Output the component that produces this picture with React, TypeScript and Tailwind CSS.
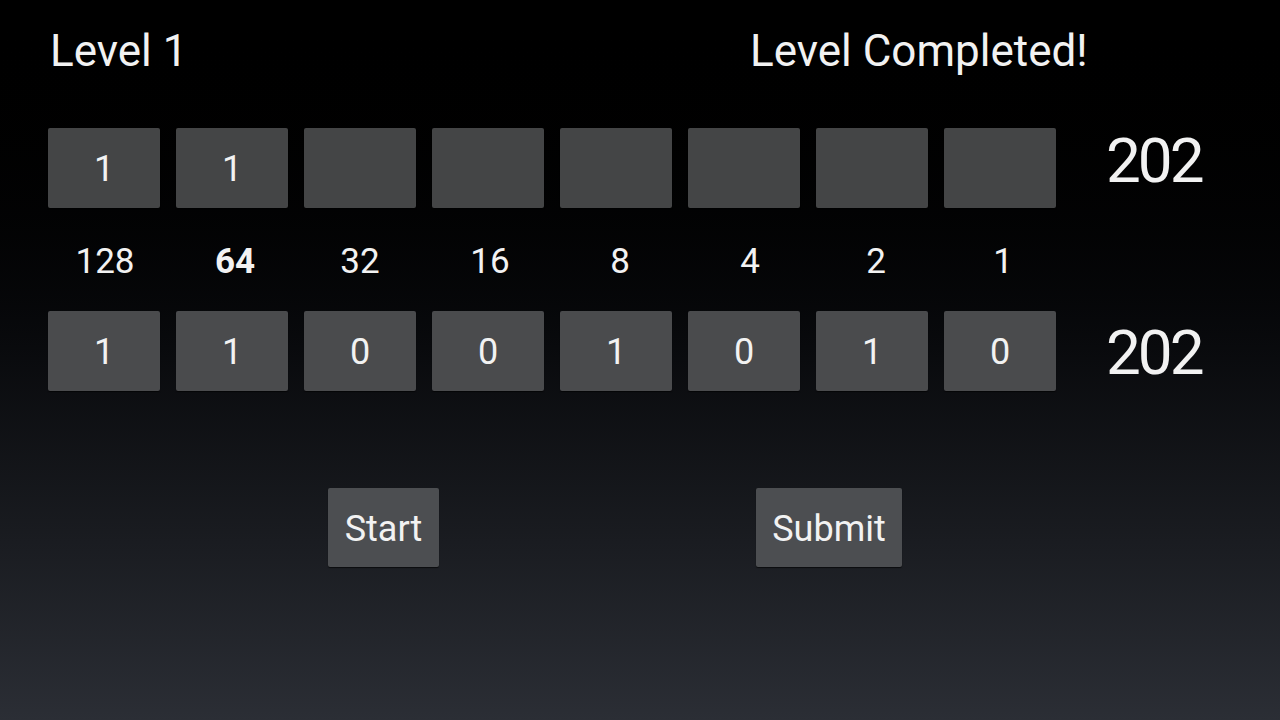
import React from "react";

const top = ["1", "1", "", "", "", "", "", ""];
const labels = ["128", "64", "32", "16", "8", "4", "2", "1"];
const labelShift = [
  "translate-x-px",
  "translate-x-[3px]",
  "translate-x-0",
  "translate-x-[2px]",
  "translate-x-[4px]",
  "translate-x-[6px]",
  "translate-x-[4px]",
  "translate-x-[3px]",
];
const bottom = ["1", "1", "0", "0", "1", "0", "1", "0"];

function Cell({ v, bg }: { v: string; bg: string }) {
  return (
    <div
      className={`w-[112px] h-[80px] rounded-[2px] flex items-center justify-center text-[36px] text-[#f2f2f2] shadow-[0_1px_1px_rgba(0,0,0,0.6)] ${bg}`}
    >
      <span className="translate-y-px">{v}</span>
    </div>
  );
}

export default function App() {
  return (
    <div
      className="w-full h-[720px] bg-gradient-to-b from-[#000000] to-[#2b2e35] text-[#f2f2f2] overflow-hidden"
      style={{ fontFamily: "Roboto, 'Noto Sans', sans-serif" }}
    >
      <div className="flex pl-[50px] pt-[24px] h-[128px] items-start">
        <div className="w-[700px] text-[44px] leading-[54px]">Level 1</div>
        <div className="text-[44px] leading-[54px]">Level Completed!</div>
      </div>

      <div className="flex items-center pl-[48px]">
        <div className="flex gap-4">
          {top.map((v, i) => (
            <Cell key={i} v={v} bg="bg-[#444546]" />
          ))}
        </div>
        <div className="ml-[50px] text-[62px] leading-[80px] tracking-[-3px] -translate-y-[7px]">
          202
        </div>
      </div>

      <div className="flex pl-[48px] h-[103px] items-center pt-[5px]">
        <div className="flex gap-4">
          {labels.map((v, i) => (
            <div
              key={i}
              className={`w-[112px] text-center text-[35px] ${labelShift[i]} ${i === 1 ? "font-bold" : ""}`}
            >
              {v}
            </div>
          ))}
        </div>
      </div>

      <div className="flex items-center pl-[48px]">
        <div className="flex gap-4">
          {bottom.map((v, i) => (
            <Cell key={i} v={v} bg="bg-[#4a4b4d]" />
          ))}
        </div>
        <div className="ml-[50px] text-[62px] leading-[80px] tracking-[-3px] translate-y-[2px]">
          202
        </div>
      </div>

      <div className="flex pt-[97px]">
        <div className="ml-[328px] w-[111px] h-[79px] rounded-[2px] bg-[#4c4e51] flex items-center justify-center text-[36px] shadow-[0_1px_1px_rgba(0,0,0,0.6)]">
          <span className="translate-y-px">Start</span>
        </div>
        <div className="ml-[317px] w-[146px] h-[79px] rounded-[2px] bg-[#4c4e51] flex items-center justify-center text-[36px] shadow-[0_1px_1px_rgba(0,0,0,0.6)]">
          <span className="translate-y-px">Submit</span>
        </div>
      </div>
    </div>
  );
}
